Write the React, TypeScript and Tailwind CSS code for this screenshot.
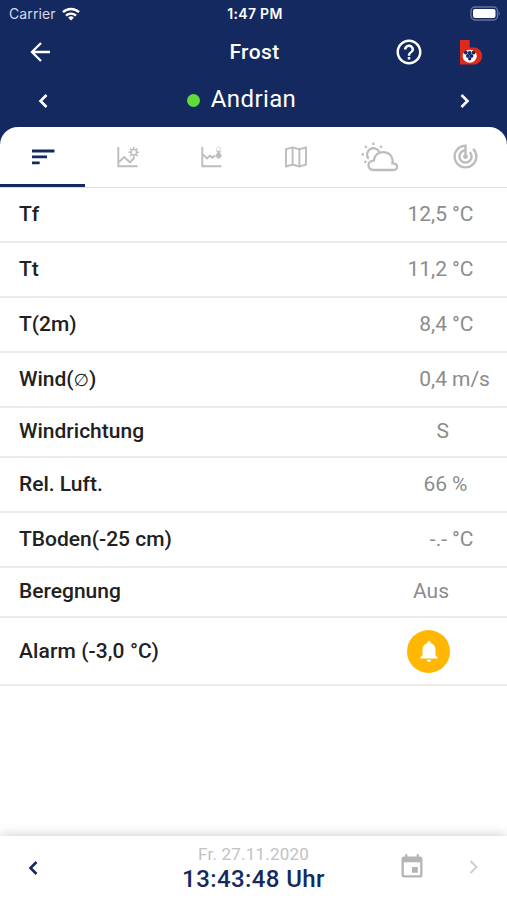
import React, { useState } from 'react';
import { MdEvent, MdHelpOutline, MdNotifications, MdTrackChanges } from 'react-icons/md';

interface Measurement {
    label: React.ReactNode;
    value?: string;
    unit?: string;
    height: string;
    alarm?: boolean;
}

const measurements: Measurement[] = [
    { label: 'Tf', value: '12,5', unit: '°C', height: 'h-[55px]' },
    { label: 'Tt', value: '11,2', unit: '°C', height: 'h-[55px]' },
    { label: 'T(2m)', value: '8,4', unit: '°C', height: 'h-[55px]' },
    {
        label: (
            <>
                Wind(<span className="font-['DejaVu_Sans'] text-[17.5px] leading-none font-normal">∅</span>)
            </>
        ),
        value: '0,4',
        unit: 'm/s',
        height: 'h-[55px]',
    },
    { label: 'Windrichtung', value: 'S', height: 'h-[50px]' },
    { label: 'Rel. Luft.', value: '66', unit: '%', height: 'h-[55px]' },
    { label: 'TBoden(-25 cm)', value: '-.-', unit: '°C', height: 'h-[55px]' },
    { label: 'Beregnung', value: 'Aus', height: 'h-[50px]' },
    { label: 'Alarm (-3,0 °C)', height: 'h-[68px]', alarm: true },
];

function Chevron({ direction, className = '' }: { direction: 'left' | 'right'; className?: string }) {
    return (
        <svg viewBox="0 0 10 16" className={`h-4 w-[10px] fill-none ${className}`}>
            <path d={direction === 'left' ? 'M8.5 2 L2.5 8 L8.5 14' : 'M1.5 2 L7.5 8 L1.5 14'} />
        </svg>
    );
}

function WifiIcon() {
    return (
        <svg viewBox="0 0 18 14" className="h-[14px] w-[18px] fill-none stroke-white stroke-[2.4]">
            <path d="M1 5.2 A11.5 11.5 0 0 1 17 5.2" />
            <path d="M4 8.6 A7.2 7.2 0 0 1 14 8.6" />
            <path d="M9 13.5 L6.2 10.7 A4 4 0 0 1 11.8 10.7 Z" className="fill-white stroke-none" />
        </svg>
    );
}

function BatteryIcon() {
    return (
        <svg viewBox="0 0 31 15" className="h-[15px] w-[31px]">
            <rect x="1" y="1" width="26.5" height="13" rx="4" className="fill-none stroke-[#66739b] stroke-[1.4]" />
            <rect x="3" y="3" width="22.5" height="9" rx="2" className="fill-white" />
            <path d="M28.8 5.2 Q30.8 7.5 28.8 9.8 Z" className="fill-[#66739b]" />
        </svg>
    );
}

function BrandLogo() {
    return (
        <svg viewBox="0 0 24 25" className="h-[25px] w-6">
            <path d="M0 0 H9.7 V7.5 H15 A8.6 8.6 0 0 1 15 24.5 H0 Z" className="fill-[#e0291d]" />
            <ellipse cx="9.7" cy="16.2" rx="7" ry="6.5" className="fill-white" />
            <g className="fill-[#14295f]">
                <circle cx="5.8" cy="12.6" r="1.9" />
                <circle cx="9.7" cy="13" r="1.9" />
                <circle cx="13.6" cy="12.6" r="1.9" />
                <circle cx="7.9" cy="15.9" r="1.9" />
                <circle cx="11.5" cy="15.9" r="1.9" />
                <circle cx="9.7" cy="18.7" r="1.7" />
            </g>
        </svg>
    );
}

function ListIcon() {
    return (
        <svg viewBox="0 0 23 16" className="h-4 w-[23px] fill-current">
            <path d="M0 0.5 H22.5 V3.4 H0 Z M0 6.5 H15 V9.3 H0 Z M0 12.5 H7.7 V15.3 H0 Z" />
        </svg>
    );
}

function SunChartIcon() {
    return (
        <svg viewBox="0 0 24 24" className="size-6 fill-none stroke-current stroke-[1.9]">
            <path d="M2.3 2 V21.3 H21.5" />
            <path d="M3 17 L8.2 12 L14 17.5 L18.5 12.5" />
            <circle cx="17.8" cy="7.2" r="2.8" className="stroke-[1.4]" />
            <path
                d="M17.8 1.8 V4 M17.8 10.4 V12.4 M12.5 7.2 H14.6 M21 7.2 H23 M14.1 3.4 L15.6 5 M20.1 9.4 L21.6 11 M14.1 11 L15.6 9.4 M20.1 5 L21.6 3.4"
                className="stroke-[1.5]"
            />
        </svg>
    );
}

function ThermoChartIcon() {
    return (
        <svg viewBox="0 0 24 24" className="size-6 fill-none stroke-current stroke-[1.9]">
            <path d="M2.3 2 V21.3 H21.5" />
            <path d="M3 9.5 L7 13.5 L10 10.5 L12.3 12.8 L15 10.5" />
            <path d="M16.5 7 V4 A2.1 2.1 0 0 1 20.7 4 V7" className="stroke-[0.9] opacity-60" />
            <path d="M17.6 6 H19.6 V8.2 A2.6 2.6 0 1 1 17.6 8.2 Z" className="fill-current stroke-[0.8]" />
        </svg>
    );
}

function MapIcon() {
    return (
        <svg viewBox="0 0 24 24" className="mr-[2px] size-6 fill-none stroke-current stroke-[1.9]">
            <path d="M2 4.2 L8.6 2.4 L15.4 4.2 L22 2.4 V19.6 L15.4 21.4 L8.6 19.6 L2 21.4 Z M8.6 2.4 V19.6 M15.4 4.2 V21.4" />
        </svg>
    );
}

function WeatherIcon() {
    return (
        <svg viewBox="0 0 38 30" className="mr-[2px] h-[30px] w-[38px] fill-none stroke-current stroke-[2.3]">
            <path d="M7.6 16.8 A6.4 6.4 0 1 1 18.2 9.8" />
            <path d="M12.4 0.5 V3 M4 4 L5.8 5.8 M20.8 4 L19.2 5.6 M0.5 12.4 H3 M3.6 20.7 L5.3 19" />
            <path d="M12.3 28 C5.8 28 5.8 18.6 12.7 18.6 C14 7.2 30.5 7.4 31.7 18.1 L31.4 21.4 C37.6 21.4 37.6 28 32.5 28 Z" />
        </svg>
    );
}

const tabs = [
    { id: 'list', icon: <ListIcon />, name: 'Messwerte' },
    { id: 'sun', icon: <SunChartIcon />, name: 'Wetterdiagramm' },
    { id: 'temperature', icon: <ThermoChartIcon />, name: 'Temperaturdiagramm' },
    { id: 'map', icon: <MapIcon />, name: 'Karte' },
    { id: 'weather', icon: <WeatherIcon />, name: 'Wetter' },
    { id: 'radar', icon: <MdTrackChanges className="mr-px size-[29px]" />, name: 'Radar' },
];

function StatusBar() {
    return (
        <div className="grid h-[27px] grid-cols-3 items-center pl-[9px] pr-[6px] font-[Inter] text-[14px] leading-none">
            <div className="flex items-center gap-[6px] tracking-[0.1px] text-[#d5daea]">
                Carrier <WifiIcon />
            </div>
            <span className="text-center text-[14px] font-semibold tracking-[0.3px]">1:47 PM</span>
            <div className="flex justify-end pb-px">
                <BatteryIcon />
            </div>
        </div>
    );
}

function MeasurementRow({ label, value, unit, height, alarm }: Measurement) {
    return (
        <div className={`flex shrink-0 items-center border-b-2 border-[#ebebeb] pl-[19px] ${height}`}>
            <span className={`flex-1 text-[21px] leading-6 font-medium text-[#212121] ${alarm ? 'tracking-[0.1px]' : 'pb-[2px]'}`}>
                {label}
            </span>
            {alarm ? (
                <button type="button" className="mr-[57px] flex size-[43px] items-center justify-center rounded-full bg-[#ffb703] text-white">
                    <MdNotifications className="size-[26px]" />
                </button>
            ) : (
                <span className="flex pb-[2px] text-[21px] leading-6 text-[#8c8c8c]">
                    <span className={unit ? 'pr-[2px]' : ''}>{value}</span>
                    <span className="w-[58px] pl-[3px]">{unit}</span>
                </span>
            )}
        </div>
    );
}

export default function App() {
    const [activeTab, setActiveTab] = useState('list');

    return (
        <div className="flex h-[900px] w-[507px] flex-col overflow-hidden bg-[#14295f] font-[Roboto,sans-serif]">
            <header className="flex h-[127px] shrink-0 flex-col text-white">
                <StatusBar />
                <div className="grid h-[50px] grid-cols-3 items-center pl-[30px] pr-[23px]">
                    <button type="button" aria-label="Zurück">
                        <svg viewBox="0 0 20 20" className="size-5 fill-none stroke-white stroke-[2.3]">
                            <path d="M11 1 L2 10 L11 19 M2 10 H20" />
                        </svg>
                    </button>
                    <h1 className="pt-[2px] pr-[5px] text-center text-[21px] font-medium tracking-[0.4px]">Frost</h1>
                    <div className="flex items-center justify-end gap-[36px]">
                        <MdHelpOutline className="size-[30px]" />
                        <BrandLogo />
                    </div>
                </div>
                <div className="flex h-[48px] items-center justify-between pl-[38px] pr-[37px]">
                    <Chevron direction="left" className="stroke-white stroke-[2.6]" />
                    <div className="mr-[25px] flex items-center gap-[11px] pb-[5px] text-[24px] tracking-[0.4px]">
                        <span className="mt-[4px] size-[13px] rounded-full bg-[#62dc38]" />
                        Andrian
                    </div>
                    <Chevron direction="right" className="stroke-white stroke-[2.6]" />
                </div>
            </header>

            <main className="flex min-h-0 flex-1 flex-col rounded-t-[18px] bg-white">
                <nav className="grid h-[61px] shrink-0 grid-cols-6 border-b border-[#dedede]">
                    {tabs.map((tab) => (
                        <button
                            key={tab.id}
                            type="button"
                            aria-label={tab.name}
                            onClick={() => setActiveTab(tab.id)}
                            className={`flex items-center justify-center border-b-[3px] pt-[2px] pl-[2px] ${
                                activeTab === tab.id ? 'border-[#14295f] text-[#14295f]' : 'border-transparent text-[#bdbdbd]'
                            }`}
                        >
                            {tab.icon}
                        </button>
                    ))}
                </nav>
                {measurements.map((measurement, index) => (
                    <MeasurementRow key={index} {...measurement} />
                ))}
            </main>

            <footer className="grid h-[64px] shrink-0 grid-cols-[1fr_auto_1fr] items-center bg-white pl-[28px] pr-[28px] shadow-[0_0_12px_rgba(0,0,0,0.22)]">
                <Chevron direction="left" className="stroke-[#14295f] stroke-[2.6]" />
                <div className="flex flex-col items-center">
                    <span className="text-[17px] leading-[22px] tracking-[0.2px] text-[#c2c2c2]">Fr. 27.11.2020</span>
                    <span className="text-[24px] font-medium leading-[29px] tracking-[0.4px] text-[#14295f]">13:43:48 Uhr</span>
                </div>
                <div className="flex items-center justify-end gap-[43px] pb-[2px]">
                    <MdEvent className="size-[28px] text-[#b5b5b5]" />
                    <Chevron direction="right" className="stroke-[#cecece] stroke-2" />
                </div>
            </footer>
        </div>
    );
}
